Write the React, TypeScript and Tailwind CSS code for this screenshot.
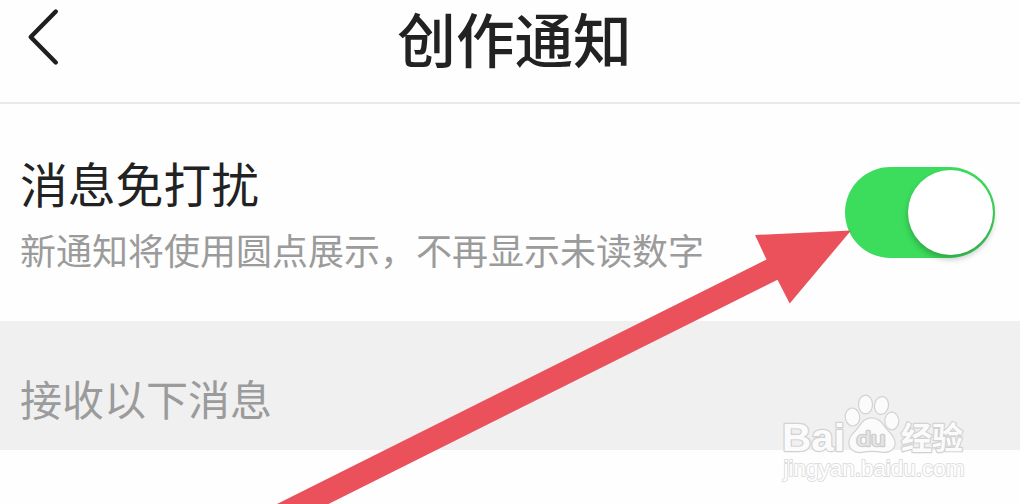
import { useState } from "react";

const BackIcon = () => (
  <svg width="34" height="60" viewBox="0 0 34 60" fill="none">
    <path
      d="M29.8 3.5L4.7 29L29.8 54.5"
      stroke="#1f1f1f"
      strokeWidth="4.4"
      strokeLinecap="round"
      strokeLinejoin="round"
    />
  </svg>
);

const Arrow = () => (
  <svg
    className="pointer-events-none absolute top-0 left-0"
    width="1020"
    height="504"
    viewBox="0 0 1020 504"
  >
    <polygon
      fill="#ea515b"
      points="851,230.5 755,235 766.5,259.5 277,504 328.5,504 777.5,279.7 789.7,303.5"
    />
  </svg>
);

const Watermark = () => (
  <svg
    className="pointer-events-none absolute right-[40px] bottom-0"
    width="200"
    height="124"
    viewBox="780 380 200 124"
    fill="#fbfbfb"
    stroke="#d2d2d2"
    strokeWidth="2.4"
    strokeLinejoin="round"
    paintOrder="stroke"
    fontFamily="'Liberation Sans', sans-serif"
  >
    <text x="782" y="450.5" fontSize="38.5" fontWeight="700" textLength="63" lengthAdjust="spacingAndGlyphs">
      Bai
    </text>
    <ellipse cx="865.5" cy="404.5" rx="6.4" ry="8.8" />
    <ellipse cx="881.5" cy="405.5" rx="6.4" ry="8.4" transform="rotate(10 881.5 405.5)" />
    <ellipse cx="852.5" cy="417" rx="6.6" ry="8.4" transform="rotate(-8 852.5 417)" />
    <ellipse cx="891.8" cy="421" rx="6.4" ry="8.2" />
    <path d="M871.5 418.5C878 418.5 882 423 885 428C889 433 895 437 894.5 444C894 450 888 452.5 882 451.5C875 450.5 868 450.5 862 451.8C855 452.8 849.5 449 849.5 442.5C849.5 436 855 433 858.5 428C862 423 865 418.5 871.5 418.5Z" />
    <text
      x="856.5"
      y="446"
      fontSize="21"
      fill="#e6e6e6"
      stroke="#cdcdcd"
      textLength="29"
      lengthAdjust="spacingAndGlyphs"
    >
      du
    </text>
    <text x="901" y="448.5" fontSize="31" fontWeight="700" fontFamily="'Noto Sans CJK SC', sans-serif">
      经验
    </text>
    <text
      x="783.5"
      y="476"
      fontSize="22.5"
      stroke="#dedede"
      strokeWidth="2"
      fill="#ffffff"
      textLength="181"
      lengthAdjust="spacingAndGlyphs"
    >
      jingyan.baidu.com
    </text>
  </svg>
);

const App = () => {
  const [muted, setMuted] = useState<boolean>(true);

  return (
    <div className="relative h-[504px] w-[1020px] overflow-hidden bg-[#fefefe] font-['Noto_Sans_CJK_SC',sans-serif] text-[#222222]">
      <header className="grid h-[104px] grid-cols-[1fr_auto_1fr] items-start border-b-2 border-[#e9e9e9]">
        <button className="mt-2 ml-[26px] w-fit">
          <BackIcon />
        </button>
        <h1 className="mr-[-9px] text-[58.6px] leading-[76px] font-medium">创作通知</h1>
      </header>

      <section className="flex h-[217px] items-start justify-between pr-[25px] pl-5">
        <div className="pt-[49px]">
          <h2 className="text-[47.8px] leading-[60px]">消息免打扰</h2>
          <p className="mt-[11px] text-[36px] leading-[50px] text-[#9b9b9b]">
            新通知将使用圆点展示，不再显示未读数字
          </p>
        </div>
        <button
          onClick={() => setMuted(!muted)}
          className={`mt-[63px] flex h-[91px] w-[150px] items-center rounded-full px-[2px] ${
            muted ? "justify-end bg-[#3cdd5c]" : "justify-start bg-[#e5e5e5]"
          }`}
        >
          <span className="mb-px size-[85px] rounded-full bg-white shadow-[0_4px_6px_rgba(0,0,0,0.25)]" />
        </button>
      </section>

      <section className="h-[129px] bg-[#f0f0f0] px-5 pt-[47px]">
        <p className="text-[42px] leading-[60px] text-[#9b9b9b]">接收以下消息</p>
      </section>

      <Arrow />
      <Watermark />
    </div>
  );
};

export default App;
